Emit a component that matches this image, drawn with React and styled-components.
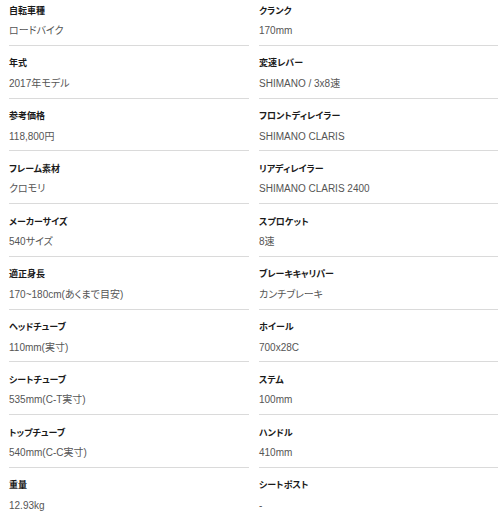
import React from 'react';
import styled, { createGlobalStyle } from 'styled-components';

const GlobalStyle = createGlobalStyle`
  html, body {
    margin: 0;
    padding: 0;
    background: #fff;
    overflow: hidden;
  }
  body {
    font-family: "Liberation Sans", "Noto Sans CJK JP", sans-serif;
    font-feature-settings: "palt";
  }
`

const SpecTable = styled.div`
  display: grid;
  grid-template-columns: 240px 240px;
  column-gap: 10px;
  padding-left: 9px;
  margin-top: -7px;
`

const SpecColumn = styled.div`
  display: flex;
  flex-direction: column;
`

const SpecRow = styled.div`
  box-sizing: border-box;
  height: 52.75px;
  padding-top: 11.5px;
  border-bottom: 1px solid #dadada;
  display: flex;
  flex-direction: column;
  gap: 8.5px;
`

const SpecLabel = styled.div`
  font-size: 9px;
  line-height: 12px;
  font-weight: bold;
  color: #1a1a1a;
`

const SpecValue = styled.div`
  font-size: 10px;
  line-height: 12px;
  color: #555;
`

const left = [
  ['自転車種', 'ロードバイク'],
  ['年式', '2017年モデル'],
  ['参考価格', '118,800円'],
  ['フレーム素材', 'クロモリ'],
  ['メーカーサイズ', '540サイズ'],
  ['適正身長', '170~180cm(あくまで目安)'],
  ['ヘッドチューブ', '110mm(実寸)'],
  ['シートチューブ', '535mm(C-T実寸)'],
  ['トップチューブ', '540mm(C-C実寸)'],
  ['重量', '12.93kg'],
]

const right = [
  ['クランク', '170mm'],
  ['変速レバー', 'SHIMANO / 3x8速'],
  ['フロントディレイラー', 'SHIMANO CLARIS'],
  ['リアディレイラー', 'SHIMANO CLARIS 2400'],
  ['スプロケット', '8速'],
  ['ブレーキキャリパー', 'カンチブレーキ'],
  ['ホイール', '700x28C'],
  ['ステム', '100mm'],
  ['ハンドル', '410mm'],
  ['シートポスト', '-'],
]

export default function App() {
  return (
    <>
      <GlobalStyle />
      <SpecTable>
        {[left, right].map((col, colIndex) => (
          <SpecColumn key={colIndex}>
            {col.map(([label, value]) => (
              <SpecRow key={label}>
                <SpecLabel>{label}</SpecLabel>
                <SpecValue>{value}</SpecValue>
              </SpecRow>
            ))}
          </SpecColumn>
        ))}
      </SpecTable>
    </>
  )
}
